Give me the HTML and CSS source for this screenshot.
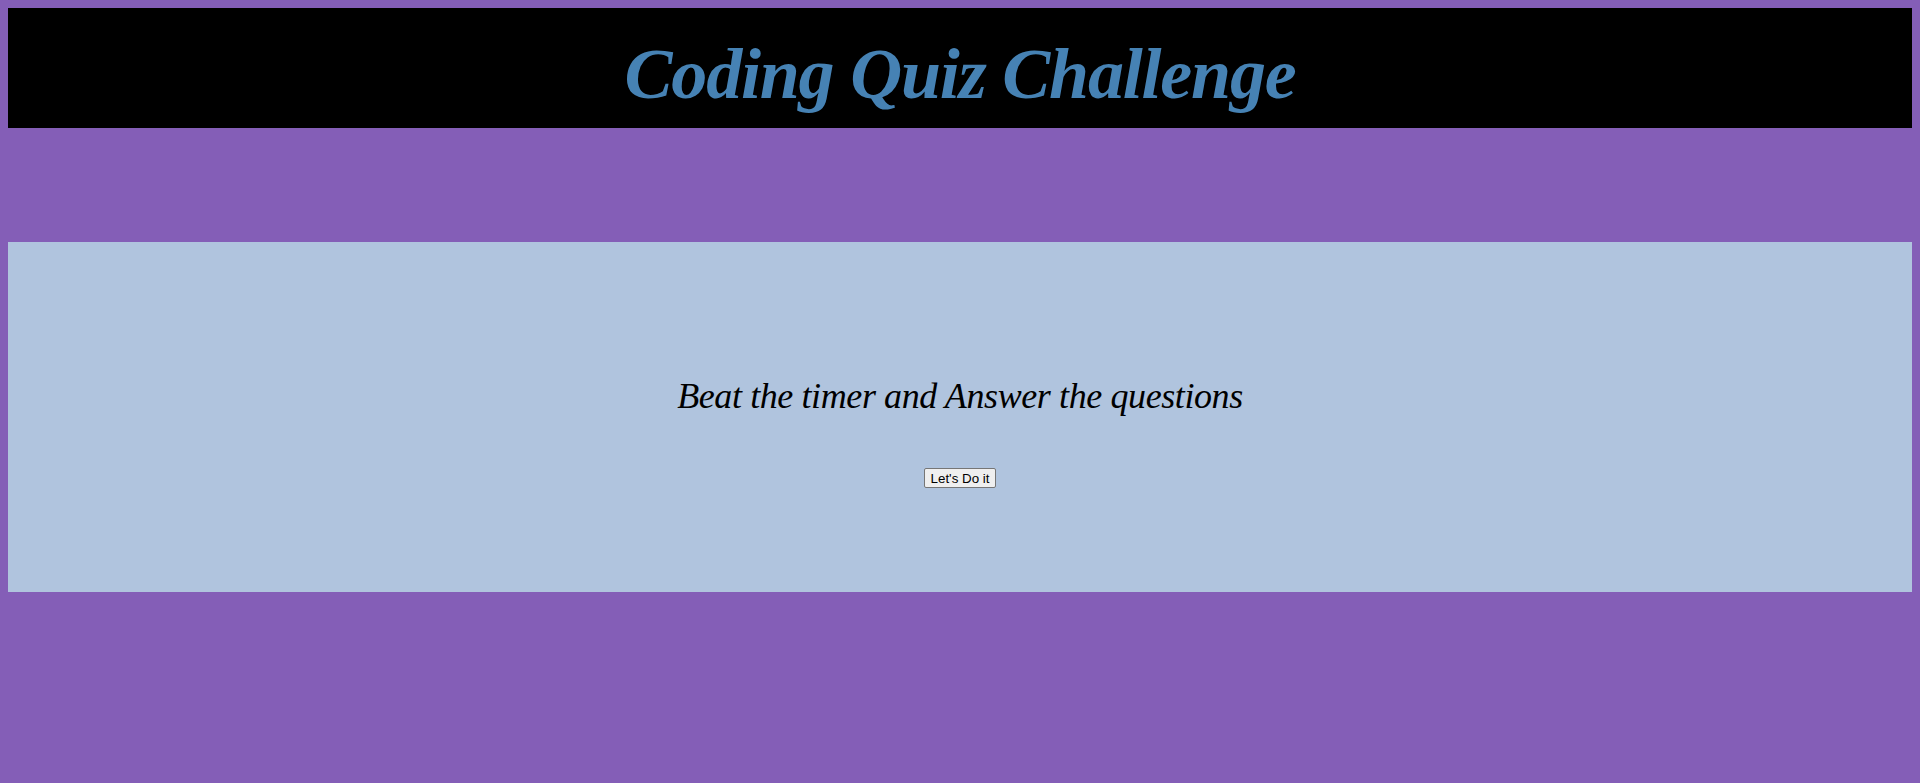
FILE: index.html
```html
<!DOCTYPE html>
<html lang="en">
<head>
<meta charset="utf-8">
<title>Coding Quiz Challenge</title>
<link rel="stylesheet" href="styles.css">
</head>
<body>
<header class="top-bar">
  <h1 class="title">Coding Quiz Challenge</h1>
</header>
<main class="quiz-panel">
  <h2 class="intro">Beat the timer and Answer the questions</h2>
  <button class="start-btn" type="button">Let's Do it</button>
</main>
</body>
</html>
```

FILE: styles.css
```css
html, body {
  background: #845eb7;
}
body {
  margin: 8px;
  font-family: "Liberation Serif", "Times New Roman", serif;
}
.top-bar {
  background: #000;
  height: 108px;
  padding-top: 12px;
  display: flex;
  align-items: center;
  justify-content: center;
}
.title {
  margin: 0;
  color: #4682b4;
  font-family: "Liberation Serif", serif;
  font-style: italic;
  font-weight: bold;
  font-size: 72px;
  letter-spacing: -1.2px;
  line-height: 1;
}
.quiz-panel {
  margin-top: 114px;
  height: 350px;
  box-sizing: border-box;
  padding-top: 132px;
  background: #b0c4de;
  display: flex;
  flex-direction: column;
  align-items: center;
}
.intro {
  margin: 0;
  font-family: "Liberation Serif", serif;
  font-style: italic;
  font-weight: normal;
  font-size: 36px;
  letter-spacing: -0.4px;
  line-height: 44px;
  color: #000;
}
.start-btn {
  margin-top: 50px;
  font-family: "Liberation Sans", Arial, sans-serif;
  font-size: 13.33px;
  height: 20px;
  padding: 1px 6px;
  background: #efefef;
  border: 1px solid #767676;
  border-radius: 2px;
  color: #000;
}
```
